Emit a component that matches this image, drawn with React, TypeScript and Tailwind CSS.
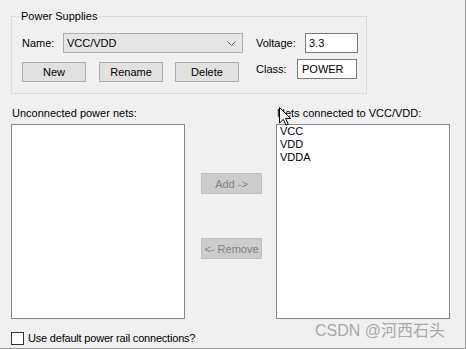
import React from "react";

const font = { fontFamily: '"Liberation Sans", Arial, sans-serif' };

function Btn({ label, w, disabled = false, cls = "" }: { label: string; w: string; disabled?: boolean; cls?: string }) {
  return (
    <div
      className={`${w} ${cls} h-[20px] flex items-center justify-center border ${
        disabled ? "bg-[#cccccc] border-[#bfbfbf] text-[#838383]" : "bg-[#e1e1e1] border-[#adadad] text-black"
      }`}
    >
      {label}
    </div>
  );
}

export default function App() {
  return (
    <div
      className="relative w-[466px] h-[349px] bg-[#f0f0f0] border-r border-b border-[#9a9a9a] text-[11px] leading-[14px] text-black overflow-hidden"
      style={font}
    >
      {/* Group box */}
      <div className="relative ml-[11px] mt-[16px] w-[356px] h-[78px] border border-[#dcdcdc]">
        <div className="absolute left-[7px] top-[-8px] px-[2px] bg-[#f0f0f0]">Power Supplies</div>
        <div className="pl-[10px] pt-[16px]">
          <div className="flex items-center h-[20px]">
            <div className="w-[41px]">Name:</div>
            <div className="w-[180px] h-[20px] bg-[#e5e5e5] border border-[#adadad] flex items-center pl-[3px] pr-[5px] justify-between">
              <span>VCC/VDD</span>
              <svg width="9" height="5" viewBox="0 0 9 5" className="mr-[1px]">
                <path d="M0.5 0.5 L4.5 4.5 L8.5 0.5" fill="none" stroke="#606060" strokeWidth="1" />
              </svg>
            </div>
            <div className="ml-[13px] w-[49px]">Voltage:</div>
            <div className="w-[53px] h-[20px] bg-white border border-[#7a7a7a] flex items-center pl-[3px]">3.3</div>
          </div>
          <div className="flex items-start h-[20px] mt-[6px]">
            <Btn label="New" w="w-[64px]" cls="mt-[3px]" />
            <Btn label="Rename" w="w-[64px]" cls="mt-[3px] ml-[13px]" />
            <Btn label="Delete" w="w-[64px]" cls="mt-[3px] ml-[12px]" />
            <div className="ml-[17px] w-[41px] h-[20px] flex items-center">Class:</div>
            <div className="w-[60px] h-[20px] bg-white border border-[#7a7a7a] flex items-center pl-[4px]">POWER</div>
          </div>
        </div>
      </div>

      {/* Labels row */}
      <div className="flex mt-[12px] h-[14px]">
        <div className="ml-[12px] w-[264px]">Unconnected power nets:</div>
        <div className="ml-[1px]">Nets connected to VCC/VDD:</div>
      </div>

      {/* Lists row */}
      <div className="flex mt-[4px] ml-[11px]">
        <div className="w-[174px] h-[195px] bg-white border border-[#828790]" />
        <div className="ml-[16px] mr-[14px] w-[61px] flex flex-col pt-[49px]">
          <Btn label="Add ->" w="w-[61px]" disabled cls="h-[21px]" />
          <Btn label="<- Remove" w="w-[61px]" disabled cls="h-[21px] mt-[44px]" />
        </div>
        <div className="w-[174px] h-[195px] bg-white border border-[#828790] pl-[3px] leading-[13px]">
          <div>VCC</div>
          <div>VDD</div>
          <div>VDDA</div>
        </div>
      </div>

      {/* Checkbox row */}
      <div className="flex items-center mt-[12px] ml-[11px]">
        <div className="w-[13px] h-[13px] bg-white border border-[#333333]" />
        <div className="ml-[4px] tracking-[-0.2px]">Use default power rail connections?</div>
      </div>

      {/* Watermark */}
      <div
        className="absolute left-[315px] top-[321px] text-[16px] leading-[20px] text-[#a8a8a8] whitespace-nowrap"
        style={{ fontFamily: '"Liberation Sans", "Noto Sans CJK SC", sans-serif' }}
      >
        CSDN @河西石头
      </div>

      {/* Mouse cursor */}
      <svg className="absolute left-[279px] top-[107px]" width="12" height="19" viewBox="0 0 12 19">
        <path
          d="M0.5 0.5 L0.5 16 L4.3 12.3 L7 18.2 L9.2 17.2 L6.6 11.4 L11.5 11.4 Z"
          fill="white"
          stroke="black"
          strokeWidth="1"
          strokeLinejoin="miter"
        />
      </svg>
    </div>
  );
}
